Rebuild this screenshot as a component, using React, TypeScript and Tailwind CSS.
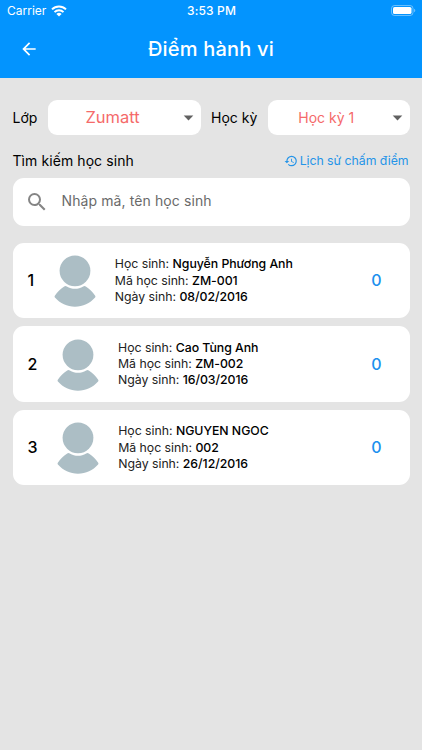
import { MdArrowBack, MdArrowDropDown, MdHistory, MdSearch } from 'react-icons/md';

interface Student {
  code: string;
  name: string;
  birthday: string;
  score: number;
}

const students: Student[] = [
  { code: 'ZM-001', name: 'Nguyễn Phương Anh', birthday: '08/02/2016', score: 0 },
  { code: 'ZM-002', name: 'Cao Tùng Anh', birthday: '16/03/2016', score: 0 },
  { code: '002', name: 'NGUYEN NGOC', birthday: '26/12/2016', score: 0 },
];

function StatusBar() {
  return (
    <div className="grid h-[22px] grid-cols-3 items-center pl-[7px] pr-[6px] text-[12px] leading-none text-white">
      <div className="flex items-center gap-[5px]">
        <span>Carrier</span>
        <svg className="mb-px" width="16" height="12" viewBox="0 0 16 12" fill="none" stroke="currentColor" strokeWidth="2">
          <path d="M1 4.4a10 10 0 0 1 14 0" />
          <path d="M3.5 7.1a6.4 6.4 0 0 1 9 0" />
          <path d="M8 11.6 5.4 9a3.7 3.7 0 0 1 5.2 0z" fill="currentColor" stroke="none" />
        </svg>
      </div>
      <span className="text-center font-medium tracking-[0.15px]">3:53 PM</span>
      <svg className="justify-self-end" width="25" height="12" viewBox="0 0 25 12">
        <rect x="0.5" y="0.5" width="21.5" height="10" rx="3" fill="none" stroke="#fff" strokeOpacity="0.4" />
        <rect x="2" y="2" width="18.5" height="7" rx="1.6" fill="#fff" />
        <path d="M23.2 3.8c1.4.5 1.4 2.9 0 3.4z" fill="#fff" fillOpacity="0.5" />
      </svg>
    </div>
  );
}

function Header() {
  return (
    <header className="h-[78px] bg-[#0394fe]">
      <StatusBar />
      <div className="grid h-[56px] grid-cols-[48px_1fr_48px] items-center text-white">
        <MdArrowBack className="ml-[19px] mt-[-2px] size-[20px]" />
        <h1 className="mt-[-2px] text-center text-[20px] font-medium leading-[28px] tracking-[0.2px]">Điểm hành vi</h1>
      </div>
    </header>
  );
}

function Avatar() {
  return (
    <svg width="42" height="52" viewBox="0 0 42 52" fill="#acbec5">
      <circle cx="21" cy="15.8" r="15.4" />
      <path d="M.8 40.8C3 37.2 6.4 33.8 10.2 31.4q1.3-.8 2.6 0c5 3.2 11.4 3.2 16.4 0q1.3-.8 2.6 0c3.8 2.4 7.2 5.8 9.4 9.4q.6.9-.1 1.8C35.8 48.5 29 51.7 21 51.7S6.2 48.5.9 42.6q-.7-.9-.1-1.800z" />
    </svg>
  );
}

function StudentCard({ student, index }: { student: Student; index: number }) {
  return (
    <li className="flex h-[75.5px] items-center rounded-[11px] bg-white pl-[15px] pr-[28px]">
      <span className="text-[16px] font-medium">{index}</span>
      <div className="ml-[19.7px] pt-[2px]">
        <Avatar />
      </div>
      <div className="ml-[19px] flex-1 whitespace-nowrap pt-[1px] text-[12.3px] leading-[16.3px] tracking-[-0.03px] text-[#222]">
        <p>Học sinh: <b className="font-medium text-black">{student.name}</b></p>
        <p>Mã học sinh: <b className="font-medium text-black">{student.code}</b></p>
        <p>Ngày sinh: <b className="font-medium text-black">{student.birthday}</b></p>
      </div>
      <span className="text-[16px] font-medium text-[#1b90ee]">{student.score}</span>
    </li>
  );
}

export default function App() {
  return (
    <div className="min-h-screen bg-[#e4e4e4] font-['Inter','Liberation_Sans',sans-serif] text-black">
      <Header />
      <main className="px-[12.5px] pt-[22px]">
        <div className="flex h-[35px] items-center text-[14px]">
          <span className="w-[35.5px]">Lớp</span>
          <button className="flex h-full w-[153px] items-center rounded-[9px] bg-white pr-[1px]">
            <span className="flex-1 text-center text-[16.5px] text-[#f56a6a]">Zumatt</span>
            <MdArrowDropDown className="size-[23px] text-[#616161]" />
          </button>
          <span className="ml-[10px] w-[57px]">Học kỳ</span>
          <button className="flex h-full w-[141.5px] items-center rounded-[9px] bg-white pr-[1px]">
            <span className="flex-1 pr-[1px] text-center text-[14px] text-[#f56a6a]">Học kỳ 1</span>
            <MdArrowDropDown className="size-[23px] text-[#616161]" />
          </button>
        </div>

        <div className="flex h-[43px] items-center justify-between pt-[8px]">
          <span className="text-[14px] tracking-[0.08px]">Tìm kiếm học sinh</span>
          <a className="flex items-center gap-[2px] pr-[1px] pt-[1px] text-[12.3px] tracking-[-0.04px] text-[#2494e8]">
            <MdHistory className="size-[14px]" />
            Lịch sử chấm điểm
          </a>
        </div>

        <label className="flex h-[48px] items-center rounded-[11px] bg-white pl-[12px]">
          <MdSearch className="size-[24px] text-[#858585]" />
          <span className="mb-[3px] ml-[13px] text-[14px] tracking-[0.1px] text-[#6a6a6a]">Nhập mã, tên học sinh</span>
        </label>

        <ul className="mt-[16.5px] flex flex-col gap-[8px]">
          {students.map((student, i) => (
            <StudentCard key={student.code} student={student} index={i + 1} />
          ))}
        </ul>
      </main>
    </div>
  );
}
